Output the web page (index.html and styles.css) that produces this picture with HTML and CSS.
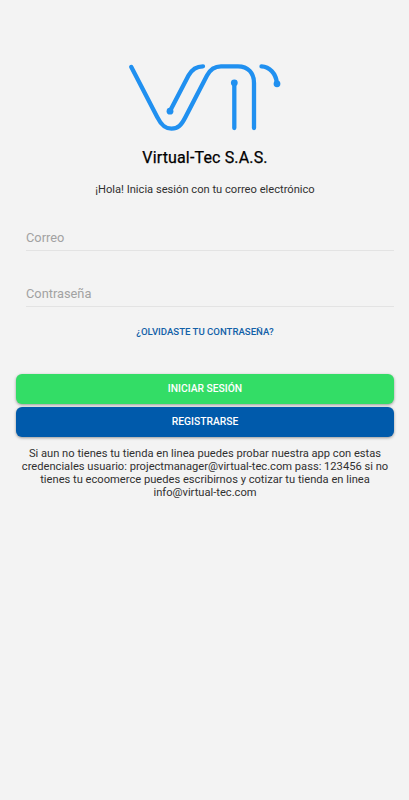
FILE: index.html
```html
<!DOCTYPE html>
<html lang="es">
<head>
<meta charset="utf-8">
<title>Virtual-Tec S.A.S.</title>
<link rel="stylesheet" href="styles.css">
</head>
<body>
<main class="login">
  <svg class="logo" viewBox="0 0 160 76" aria-hidden="true">
    <g class="logo-lines">
      <path d="M11.3 12L37.2 62C41.2 70 45 73.6 51.5 73.6S61.5 70 65.5 62L87 20.5C90.5 13.7 94.5 11.3 101 11.3H118C128 11.3 134 18 134 28V73"/>
      <path d="M50 56L68.5 20.5Q73.5 11.3 83 11.3"/>
      <path d="M114.3 28V73"/>
      <path d="M141.5 11.3C149.5 11.6 156 18.5 156.9 28"/>
    </g>
    <g class="logo-dots">
      <circle cx="50" cy="56.2" r="3.4"/>
      <circle cx="114.3" cy="27.8" r="3.4"/>
      <circle cx="157" cy="28.8" r="3.4"/>
    </g>
  </svg>
  <h1 class="title">Virtual-Tec S.A.S.</h1>
  <p class="greeting">¡Hola! Inicia sesión con tu correo electrónico</p>
  <form class="form">
    <input class="field" type="email" placeholder="Correo" aria-label="Correo">
    <input class="field" type="password" placeholder="Contraseña" aria-label="Contraseña">
    <a class="forgot">¿OLVIDASTE TU CONTRASEÑA?</a>
    <button class="button button-login" type="button">INICIAR SESIÓN</button>
    <button class="button button-register" type="button">REGISTRARSE</button>
  </form>
  <p class="note">Si aun no tienes tu tienda en linea puedes probar nuestra app con estas<br>credenciales usuario: projectmanager@virtual-tec.com pass: 123456 si no<br>tienes tu ecoomerce puedes escribirnos y cotizar tu tienda en linea<br>info@virtual-tec.com</p>
</main>
</body>
</html>
```
FILE: styles.css
```css
* { box-sizing: border-box; }
body {
  margin: 0;
  background: #f3f3f3;
  color: #303030;
  font-family: Roboto, sans-serif;
}
.login {
  display: flex;
  flex-direction: column;
  min-height: 800px;
  padding: 55px 15px 0 16px;
}
.logo { width: 160px; height: 76px; margin-left: 104px; overflow: visible; }
.logo-lines { fill: none; stroke: #2090f0; stroke-width: 4.3; stroke-linecap: round; stroke-linejoin: round; }
.logo-dots { fill: #2090f0; }
.title {
  margin: 17px 0 0;
  color: #000;
  font-size: 16px;
  font-weight: 400;
  line-height: 20px;
  letter-spacing: .15px;
  -webkit-text-stroke: .25px #000;
  text-align: center;
}
.greeting { margin: 14px 0 0; font-size: 11.15px; line-height: 16px; text-align: center; }
.form { display: flex; flex-direction: column; margin-top: 25px; }
.field {
  height: 28px;
  margin: 0 0 28px 10px;
  padding: 2px 0 0;
  border: 0;
  border-bottom: 1.5px solid #e3e3e3;
  background: transparent;
  font: 12.8px Roboto, sans-serif;
}
.field::placeholder { color: #a2a2a2; opacity: 1; }
.forgot {
  margin-top: -10px;
  color: #1261a8;
  font-size: 9.6px;
  font-weight: 500;
  line-height: 14px;
  text-align: center;
}
.button {
  height: 30px;
  padding: 0 0 1px;
  border: 0;
  border-radius: 6px;
  box-shadow: 0 1px 3px rgba(0, 0, 0, .38);
  color: #fff;
  font: 500 10.3px Roboto, sans-serif;
}
.button-login { margin-top: 34.6px; background: #33dd66; }
.button-register { margin-top: 3.4px; background: #005aab; }
.note { margin: 11.2px 0 0; font-size: 11.15px; line-height: 12.8px; text-align: center; }
```
